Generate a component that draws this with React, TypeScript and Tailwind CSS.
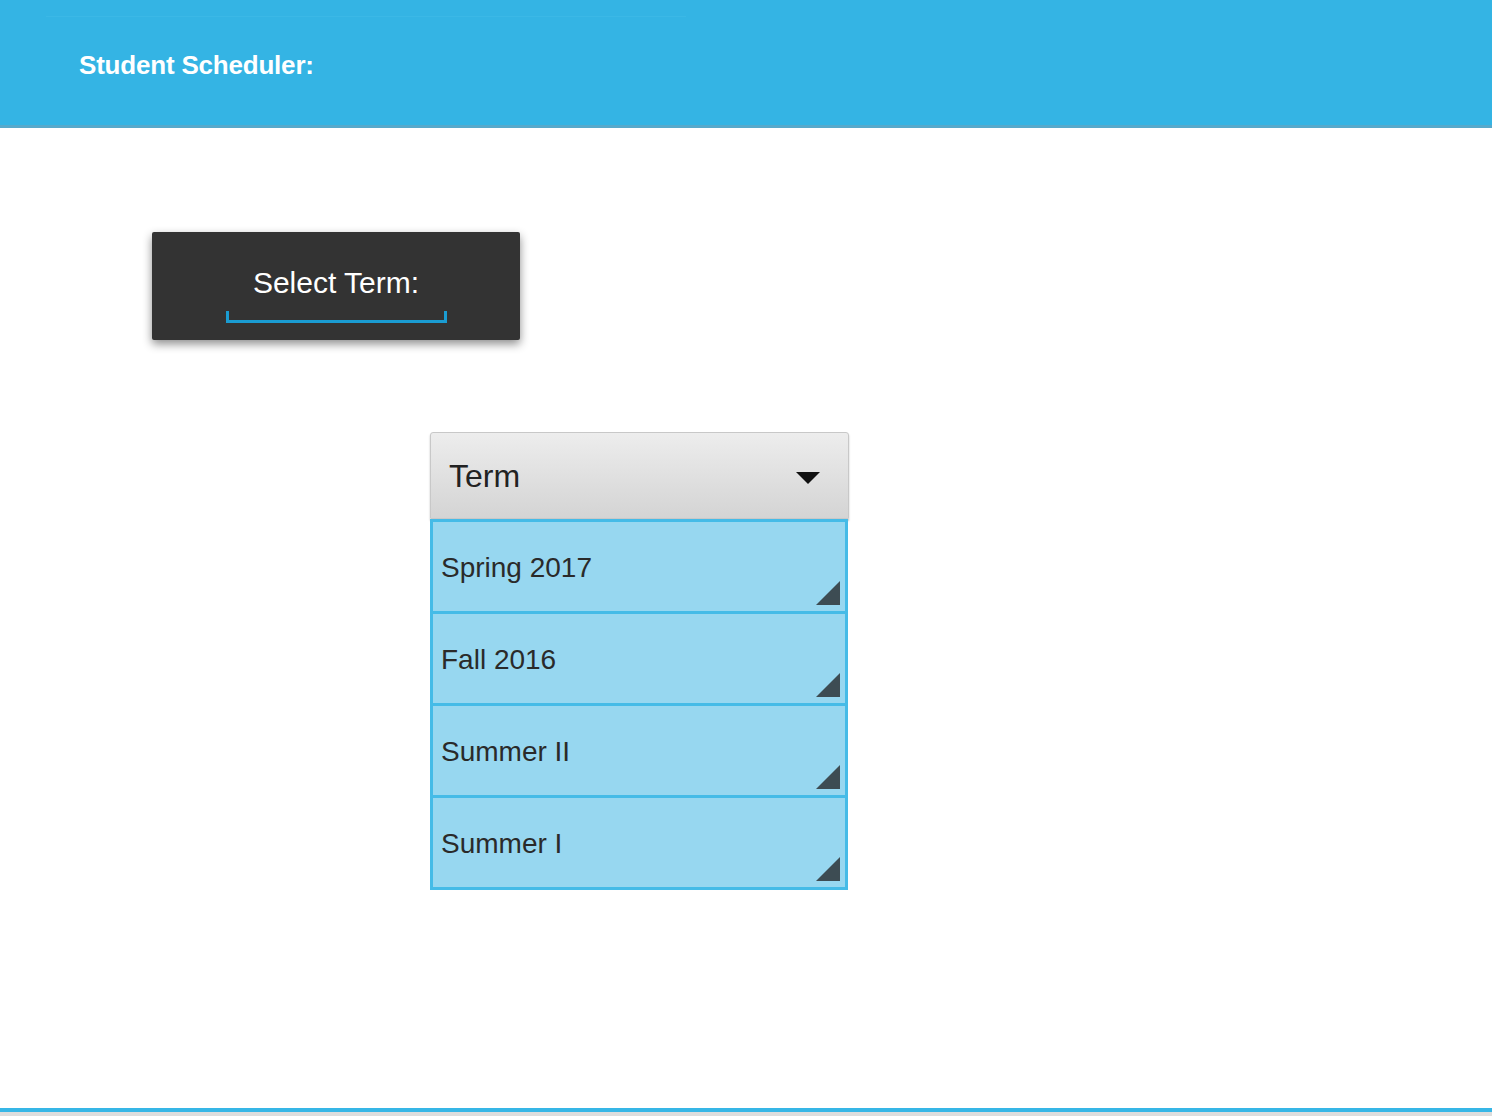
import React from "react";

const terms = ["Spring 2017", "Fall 2016", "Summer II", "Summer I"];

function Corner() {
  return (
    <svg
      width="24"
      height="24"
      viewBox="0 0 24 24"
      className="absolute right-[5px] bottom-[6px]"
    >
      <polygon points="24,0 24,24 0,24" fill="#3d4c53" />
    </svg>
  );
}

export default function App() {
  return (
    <div
      className="w-[1492px] h-[1116px] flex flex-col bg-white"
      style={{ fontFamily: '"Liberation Sans", Arial, Helvetica, sans-serif' }}
    >
      <header className="h-[128px] bg-[#34b4e4] border-b-[3px] border-[#57a9cb] flex flex-col">
        <div className="mt-[16px] ml-[46px] w-[640px] h-px bg-[#3bb8e6]" />
        <div className="mt-[31px] ml-[79px] text-white font-bold text-[26px] leading-[34px] tracking-[-0.2px]">
          Student Scheduler:
        </div>
      </header>

      <main className="flex-1 flex flex-col">
        <div className="mt-[104px] ml-[152px] w-[368px] h-[108px] bg-[#333333] rounded-[2px] shadow-[0_4px_10px_rgba(0,0,0,0.45)] flex flex-col items-center pt-[34px]">
          <div className="text-white text-[30px] leading-[34px]">Select Term:</div>
          <div className="mt-[11px] w-[221px] h-[12px] border-[3px] border-t-0 border-[#1a9cd2]" />
        </div>

        <div className="mt-[92px] ml-[430px] w-[419px] flex flex-col">
          <div className="h-[87px] rounded-t-[3px] border border-[#c8c8c8] bg-gradient-to-b from-[#ededed] to-[#d4d4d4] shadow-[0_2px_2px_rgba(0,0,0,0.25)] flex items-center justify-between pl-[18px] pr-[28px]">
            <span className="text-[32px] text-[#222] leading-none">Term</span>
            <svg width="24" height="12" viewBox="0 0 24 12" className="mt-[5px]">
              <polygon points="0,0 24,0 12,12" fill="#111" />
            </svg>
          </div>
          <div className="w-[418px] flex flex-col">
            {terms.map((t, i) => (
              <div
                key={t}
                className={
                  i === 0
                    ? "relative h-[95px] bg-[#97d7f0] border-[3px] border-[#45bbe7] flex items-center pl-[8px]"
                    : "relative h-[92px] bg-[#97d7f0] border-[3px] border-t-0 border-[#45bbe7] flex items-center pl-[8px]"
                }
              >
                <span className="text-[28px] text-[#2a2a2a] leading-none mt-[3px]">{t}</span>
                <Corner />
              </div>
            ))}
          </div>
        </div>
      </main>

      <footer className="flex flex-col">
        <div className="h-[4px] bg-[#36b6e6]" />
        <div className="h-[4px] bg-[#dddddd]" />
      </footer>
    </div>
  );
}
